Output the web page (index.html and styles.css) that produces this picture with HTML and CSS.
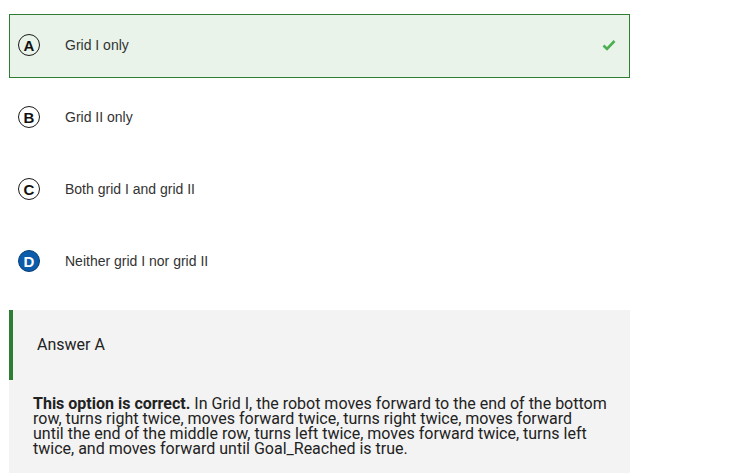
FILE: index.html
```html
<!DOCTYPE html>
<html>
<head>
<meta charset="utf-8">
<link rel="stylesheet" href="styles.css">
</head>
<body>
<div class="quiz">
  <div class="options">
    <div class="option selected">
      <span class="badge">A</span>
      <span class="label">Grid I only</span>
      <svg class="check" width="14" height="12" viewBox="0 0 14 12"><path d="M1.5 6.5 L5 10 L12.5 2" fill="none" stroke="#4caf50" stroke-width="2.6"/></svg>
    </div>
    <div class="option">
      <span class="badge">B</span>
      <span class="label">Grid II only</span>
    </div>
    <div class="option">
      <span class="badge">C</span>
      <span class="label">Both grid I and grid II</span>
    </div>
    <div class="option">
      <span class="badge filled">D</span>
      <span class="label">Neither grid I nor grid II</span>
    </div>
  </div>
  <div class="feedback">
    <div class="feedback-head">Answer A</div>
    <p class="feedback-body"><strong>This option is correct.</strong> In Grid I, the robot moves forward to the end of the bottom row, turns right twice, moves forward twice, turns right twice, moves forward<br>until the end of the middle row, turns left twice, moves forward twice, turns left twice, and moves forward until Goal_Reached is true.</p>
  </div>
</div>
</body>
</html>
```
FILE: styles.css
```css
html, body {
  margin: 0;
  padding: 0;
  background: #ffffff;
}
.quiz {
  width: 621px;
  padding: 14px 0 0 9px;
}
.options {
  display: flex;
  flex-direction: column;
  gap: 8px;
}
.option {
  height: 64px;
  box-sizing: border-box;
  border: 1px solid transparent;
  display: flex;
  align-items: center;
  padding: 0 13px 2px 8px;
  font-family: "Liberation Sans", Arial, sans-serif;
  font-size: 14px;
  color: #333333;
}
.option.selected {
  background: #e9f3ea;
  border-color: #2e7d32;
}
.badge {
  width: 22px;
  height: 22px;
  box-sizing: border-box;
  border: 1.5px solid #1a1a1a;
  border-radius: 50%;
  display: flex;
  align-items: center;
  justify-content: center;
  font-family: "Liberation Sans", Arial, sans-serif;
  font-weight: bold;
  font-size: 15px;
  color: #111111;
  flex: none;
}
.badge.filled {
  background: #0b5cab;
  border-color: #0a3f78;
  color: #ffffff;
}
.label {
  margin-left: 25px;
  flex: 1;
}
.check {
  flex: none;
  display: block;
}
.feedback {
  margin-top: 16px;
  background: #f3f3f3;
  padding-bottom: 20px;
  font-family: Roboto, "Noto Sans", sans-serif;
  color: #222222;
}
.feedback-head {
  height: 70px;
  box-sizing: border-box;
  border-left: 4px solid #2e7d32;
  padding: 0 0 2px 24px;
  display: flex;
  align-items: center;
  font-size: 16px;
}
.feedback-body {
  margin: 16px 0 0 0;
  padding: 0 12px 0 24px;
  font-size: 16px;
  line-height: 15px;
}
.feedback-body strong {
  font-weight: bold;
}
```
